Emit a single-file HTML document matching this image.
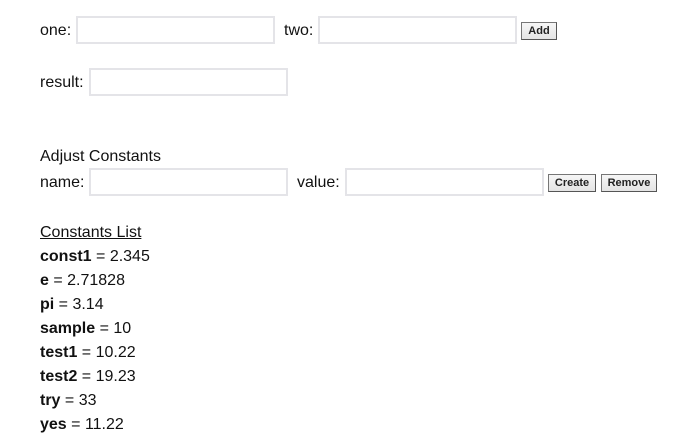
<!DOCTYPE html>
<html><head><meta charset="utf-8"><style>
body{margin:0;width:677px;height:433px;background:#fff;font-family:"Liberation Sans",Arial,sans-serif;font-size:16px;color:#111;position:relative;overflow:hidden}
.t{position:absolute;line-height:18px;white-space:nowrap}
.i{position:absolute;box-sizing:border-box;height:28px;width:199px;border:2px solid #e4e4e8;background:#fff}
.b{position:absolute;box-sizing:border-box;height:18px;border:1px solid #767676;border-right-color:#555;border-bottom-color:#555;background:linear-gradient(#f6f6f6,#e4e4e4);font:bold 11px "Liberation Sans",Arial,sans-serif;color:#222;text-align:center;line-height:16px}
</style></head><body>
<div class="t" style="left:40px;top:22px">one:</div>
<div class="i" style="left:76px;top:16px"></div>
<div class="t" style="left:284px;top:22px">two:</div>
<div class="i" style="left:318px;top:16px"></div>
<div class="b" style="left:521px;top:22px;width:36px">Add</div>

<div class="t" style="left:40px;top:74px">result:</div>
<div class="i" style="left:89px;top:68px"></div>

<div class="t" style="left:40px;top:148px">Adjust Constants</div>
<div class="t" style="left:40px;top:174px">name:</div>
<div class="i" style="left:89px;top:168px"></div>
<div class="t" style="left:297px;top:174px">value:</div>
<div class="i" style="left:345px;top:168px"></div>
<div class="b" style="left:548px;top:174px;width:48px">Create</div>
<div class="b" style="left:601px;top:174px;width:56px">Remove</div>

<div class="t" style="left:40px;top:224px;text-decoration:underline">Constants List</div>
<div class="t" style="left:40px;top:248px"><b>const1</b> = 2.345</div>
<div class="t" style="left:40px;top:272px"><b>e</b> = 2.71828</div>
<div class="t" style="left:40px;top:296px"><b>pi</b> = 3.14</div>
<div class="t" style="left:40px;top:320px"><b>sample</b> = 10</div>
<div class="t" style="left:40px;top:344px"><b>test1</b> = 10.22</div>
<div class="t" style="left:40px;top:368px"><b>test2</b> = 19.23</div>
<div class="t" style="left:40px;top:392px"><b>try</b> = 33</div>
<div class="t" style="left:40px;top:416px"><b>yes</b> = 11.22</div>
</body></html>
